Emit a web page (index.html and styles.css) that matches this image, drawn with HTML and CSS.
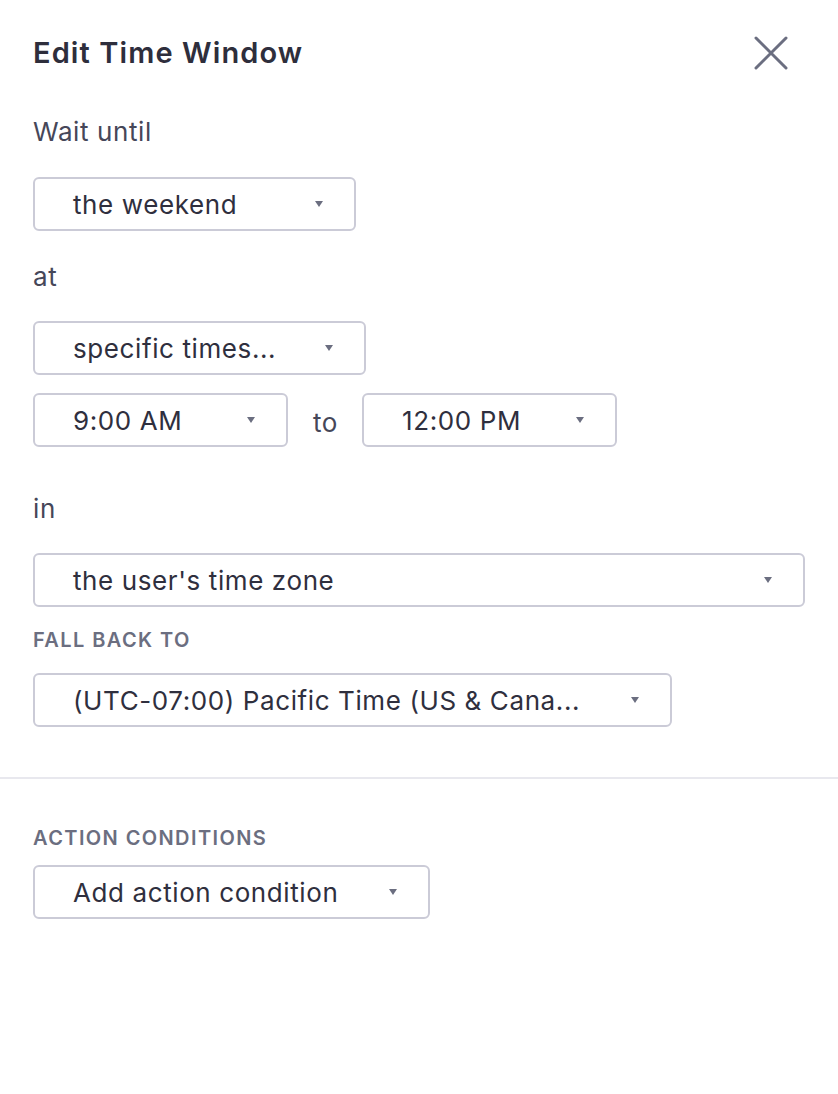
FILE: index.html
```html
<!DOCTYPE html>
<html>
<head>
<meta charset="utf-8">
<link rel="stylesheet" href="styles.css">
</head>
<body>
<div class="panel">
  <header class="head">
    <h1 class="title">Edit Time Window</h1>
    <button class="close" aria-label="Close">
      <svg width="34" height="34" viewBox="0 0 34 34"><path d="M2 2 L32 32 M32 2 L2 32" stroke="#6b6e80" stroke-width="3" stroke-linecap="round" fill="none"/></svg>
    </button>
  </header>

  <div class="section">
    <div class="label label-first">Wait until</div>
    <div class="select w-weekend"><span class="val">the weekend</span><span class="caret"></span></div>

    <div class="label">at</div>
    <div class="select w-specific"><span class="val">specific times...</span><span class="caret"></span></div>

    <div class="row">
      <div class="select w-time"><span class="val">9:00 AM</span><span class="caret"></span></div>
      <span class="to">to</span>
      <div class="select w-time"><span class="val">12:00 PM</span><span class="caret"></span></div>
    </div>

    <div class="label label-in">in</div>
    <div class="select w-full"><span class="val">the user's time zone</span><span class="caret"></span></div>

    <div class="caps caps-fallback">FALL BACK TO</div>
    <div class="select w-tz"><span class="val">(UTC-07:00) Pacific Time (US &amp; Cana...</span><span class="caret"></span></div>
  </div>

  <hr class="divider">

  <div class="section">
    <div class="caps caps-action">ACTION CONDITIONS</div>
    <div class="select w-action"><span class="val">Add action condition</span><span class="caret"></span></div>
  </div>
</div>
</body>
</html>
```

FILE: styles.css
```css
* { box-sizing: border-box; }
html, body { margin: 0; padding: 0; background: #ffffff; }
body {
  font-family: Inter, "Noto Sans", "Liberation Sans", sans-serif;
  color: #2f2f3e;
}
.panel { width: 838px; }
.head {
  display: flex;
  align-items: center;
  justify-content: space-between;
  padding: 30px 33px 0 33px;
  height: 76px;
}
.title {
  margin: 0;
  font-size: 29px;
  font-weight: 600;
  letter-spacing: 1.1px;
  color: #2e2e3c;
  line-height: 44px;
}
.close {
  border: 0;
  background: none;
  padding: 0;
  margin-right: 17px;
  width: 34px;
  height: 34px;
  display: flex;
}
.section { padding: 0 33px; }
.label {
  font-size: 26px;
  letter-spacing: 0.6px;
  line-height: 44px;
  color: #464759;
  margin: 24px 0 22px;
}
.label-first { margin-top: 34px; margin-bottom: 23px; }
.label-in { margin-top: 40px; }
.select {
  display: flex;
  align-items: center;
  height: 54px;
  border: 2px solid #cbcbd7;
  border-radius: 6px;
  padding: 0 31px 0 38px;
  font-size: 26px;
  letter-spacing: 0.6px;
  color: #2f2f3e;
  background: #fff;
}
.val { white-space: nowrap; }
.caret {
  margin-left: auto;
  width: 0;
  height: 0;
  border-left: 4px solid transparent;
  border-right: 4px solid transparent;
  border-top: 6px solid #6b6e80;
}
.w-weekend { width: 323px; }
.w-specific { width: 333px; }
.w-time { width: 255px; }
.w-full { width: 772px; }
.w-tz { width: 639px; }
.w-action { width: 397px; }
.row {
  display: flex;
  align-items: center;
  margin-top: 18px;
}
.to {
  font-size: 26px;
  letter-spacing: 0.6px;
  color: #464759;
  margin: 4px 24px 0 25px;
}
.caps {
  font-size: 20px;
  font-weight: 600;
  letter-spacing: 1.4px;
  color: #6b6e80;
  line-height: 24px;
}
.caps-fallback { margin: 21px 0 21px; }
.caps-action { margin: 47px 0 15px; }
.divider {
  border: 0;
  height: 2px;
  background: #e8e8ee;
  margin: 50px 0 0;
}
```
